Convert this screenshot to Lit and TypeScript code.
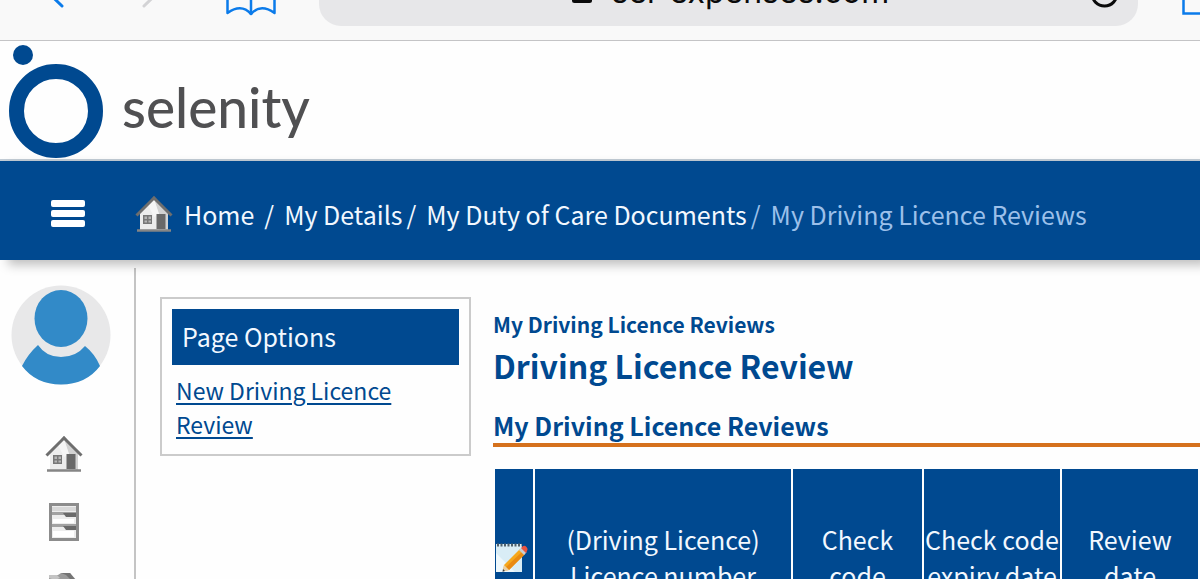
import { LitElement, html, css, svg } from "lit";
import { customElement } from "lit/decorators.js";

const house = html`
  <svg class="house" viewBox="0 0 38 37" aria-hidden="true">
    <path d="M5 17 19 4l14 13v18H5z" fill="#ececec" />
    <path d="M19 4l14 13v18h-9V19z" fill="#d2d2d2" />
    <path d="M19 4l-6 6 6 12 5-3z" fill="#f7f7f7" opacity=".8" />
    <path d="M1.500 20.500 19 3l17.500 17.500" fill="none" stroke="#6e6e6e" stroke-width="3" />
    <path d="M16 4.500 19 1l3 3.500z" fill="#6e6e6e" />
    <rect x="21.500" y="19" width="9" height="15" fill="#696969" />
    <rect x="8" y="20" width="9" height="9" fill="#777" />
    <path d="M9.500 21.500h2.500v2.500H9.500zM13.500 21.500h2.500v2.500h-2.500zM9.500 25.500h2.500v2h-2.500zM13.500 25.500h2.500v2h-2.500z" fill="#b5b5b5" />
    <path d="M2 35.500h34" stroke="#858585" stroke-width="2.500" />
  </svg>
`;

const drawers = html`
  <svg class="drawers" viewBox="0 0 30 38" aria-hidden="true">
    <rect x="1.500" y="1.500" width="27" height="35" fill="#ededed" stroke="#8c8c8c" stroke-width="3" />
    <path d="M3 4h24v4H3z" fill="#d8d8d8" />
    <path d="M3 9h24v3H3z" fill="#a2a2a2" />
    <path d="M14 10h13v4H17z" fill="#6a6a6a" />
    <path d="M3 21h24v3H3z" fill="#a2a2a2" />
    <path d="M14 23h13v4H17z" fill="#6a6a6a" />
    <path d="M4 16h21v4H4zM4 28h21v6H4z" fill="#fff" />
  </svg>
`;

const car = html`
  <svg class="car" viewBox="0 0 34 24" aria-hidden="true">
    <path d="M2 3h9l3-2h9l8 9v12H6l2-9-6-5z" fill="#9b9b9b" />
    <path d="M2 3h8l3 3-5 2-6-2z" fill="#c4c4c4" />
    <path d="M14 1h9l7 9-6-2-5-5z" fill="#747474" />
  </svg>
`;

const notepad = html`
  <svg class="notepad" viewBox="0 0 34 32" role="img" aria-label="Edit">
    <path d="M1 3h26v28H1z" fill="#d9edf6" />
    <path d="M1 31V12L20 31z" fill="#eef8fc" />
    <path d="M2 4h25" stroke="#50606b" stroke-width="3" stroke-dasharray="2 1.500" />
    <path d="M9 24 25 8l5 5-16 16-6 1z" fill="#f6a81c" />
    <path d="m11 26 17-16 2 3-16 16z" fill="#e98a12" />
    <path d="m9 24 5 5-6 1.500z" fill="#e9cfa4" />
    <path d="m8 28 2 2-2.500.800z" fill="#3c3c3c" />
    <path d="m24 9 2.500-2.500 5 5L29 14z" fill="#c9ced1" />
    <path d="m26 7 1.500-1.500q2-1.500 4 .5t.500 4L31 12z" fill="#ea5440" />
  </svg>
`;

const columns = [
  { name: "edit", lines: [] as string[] },
  { name: "licence", lines: ["(Driving Licence)", "Licence number"] },
  { name: "code", lines: ["Check", "code"] },
  { name: "expiry", lines: ["Check code", "expiry date"] },
  { name: "review", lines: ["Review", "date"] },
];

@customElement("browser-bar")
class BrowserBar extends LitElement {
  static styles = css`
    :host {
      display: flex;
      align-items: flex-end;
      box-sizing: border-box;
      height: 41px;
      overflow: hidden;
      background: #f9f9f9;
      border-bottom: 1px solid #c4c4c6;
    }
    .tools {
      display: flex;
      align-items: flex-end;
      box-sizing: border-box;
      width: 319px;
      padding: 0 43px 24px;
      justify-content: space-between;
    }
    .tool {
      display: block;
      padding: 0;
      border: 0;
      background: none;
    }
    .arrow {
      margin-bottom: 6px;
    }
    .forward {
      margin-left: 12px;
    }
    svg {
      display: block;
    }
    .address {
      flex: 1;
      display: grid;
      grid-template-columns: 1fr auto 1fr;
      align-items: end;
      box-sizing: border-box;
      height: 76px;
      margin-bottom: 14px;
      padding: 0 18px 12px 24px;
      border-radius: 22px;
      background: #e7e7e9;
    }
    .field {
      grid-column: 2;
      display: flex;
      align-items: flex-end;
      gap: 20px;
    }
    .lock {
      margin-bottom: 10px;
    }
    .url {
      width: 280px;
      height: 44px;
      padding: 0;
      border: 0;
      background: none;
      color: #0b0b0b;
      font: 32px/44px "Inter", sans-serif;
    }
    .reload {
      justify-self: end;
      margin-bottom: 6px;
    }
    .tabs {
      width: 62px;
      display: flex;
      justify-content: flex-end;
      margin-bottom: 25px;
    }
  `;

  render() {
    return html`
      <div class="tools">
        <button class="tool arrow" aria-label="Back">
          <svg width="22" height="36" viewBox="0 0 22 36"><path d="M19 1 3 16.500 19 32" fill="none" stroke="#0b7bea" stroke-width="3" stroke-linecap="round" /></svg>
        </button>
        <button class="tool arrow forward" aria-label="Forward">
          <svg width="22" height="36" viewBox="0 0 22 36"><path d="M3 1l16 15.500L3 32" fill="none" stroke="#d3d3d5" stroke-width="3" stroke-linecap="round" /></svg>
        </button>
        <button class="tool" aria-label="Bookmarks">
          <svg width="50" height="50" viewBox="0 0 50 50"><g fill="none" stroke="#0b7bea" stroke-width="2.500" stroke-linejoin="round"><path d="M1.500 12v35q14-10 23.500 1 9.500-11 23.500-1V12q-14-8-23.500 2Q15.500 4 1.500 12z" /><path d="M25 14v35" /></g></svg>
        </button>
      </div>
      <div class="address">
        <label class="field">
          <svg class="lock" width="20" height="30" viewBox="0 0 20 30" aria-label="Secure"><rect y="12" width="20" height="17" rx="2.500" fill="#0b0b0b" /><path d="M4 13V8a6 6 0 0 1 12 0v5" fill="none" stroke="#0b0b0b" stroke-width="3" /></svg>
          <input class="url" aria-label="Address" value="sel-expenses.com" />
        </label>
        <button class="tool reload" aria-label="Reload">
          <svg width="30" height="32" viewBox="0 0 30 32"><path d="M27 17A12.500 12.500 0 1 1 15 5" fill="none" stroke="#0b0b0b" stroke-width="3" /></svg>
        </button>
      </div>
      <div class="tabs">
        <button class="tool" aria-label="Tabs">
          <svg width="18" height="36" viewBox="0 0 18 36"><path d="M1.500 1v33.500H36V1z" fill="none" stroke="#0b7bea" stroke-width="2.500" /></svg>
        </button>
      </div>
    `;
  }
}

@customElement("app-root")
class AppRoot extends LitElement {
  static styles = css`
    :host {
      display: block;
      height: 100vh;
      overflow: hidden;
      background: #fefefe;
      color: #004990;
      font-family: "Noto Sans CJK SC", "Noto Sans", sans-serif;
      font-size: 25px;
      line-height: 34px;
    }
    svg {
      display: block;
    }
    a {
      color: inherit;
    }
    button {
      padding: 0;
      border: 0;
      background: none;
    }
    .brand {
      display: flex;
      align-items: flex-end;
      gap: 18px;
      padding: 3px 8px 0;
      border-bottom: 2px solid #c3cdd6;
    }
    .wordmark {
      color: #505052;
      font: 500 55px/66px "Lato", sans-serif;
      padding-bottom: 19px;
    }
    .topbar {
      display: flex;
      align-items: center;
      gap: 50px;
      box-sizing: border-box;
      height: 99px;
      padding: 6px 51px 0;
      background: #004990;
      color: #f2f8ff;
      position: relative;
      box-shadow: 8px 5px 10px rgba(0, 0, 0, 0.25);
    }
    .crumbs {
      display: flex;
      align-items: center;
      margin: 0;
      padding: 0;
      list-style: none;
      white-space: nowrap;
    }
    .crumb {
      display: flex;
      align-items: center;
    }
    .crumb a {
      text-decoration: none;
    }
    .crumb + .crumb::before {
      content: "/";
      margin: 0 10px 0 4px;
    }
    .crumb.first {
      gap: 11px;
      padding-right: 6px;
    }
    .crumb.current {
      color: #9cc0ea;
    }
    .house {
      width: 38px;
      height: 37px;
    }
    .columns {
      display: grid;
      grid-template-columns: 136px 311px minmax(0, 1fr);
      padding-top: 8px;
    }
    .rail {
      display: flex;
      flex-direction: column;
      align-items: center;
      box-sizing: border-box;
      height: 100vh;
      padding: 17px 12px 0 0;
      border-right: 2px solid #c4c4c4;
    }
    .avatar {
      width: 100px;
      height: 100px;
      margin-bottom: 50px;
    }
    .rail a {
      display: block;
      margin: 0 0 31px 6px;
    }
    .drawers {
      width: 30px;
      height: 38px;
    }
    .car {
      width: 34px;
      height: 24px;
    }
    .options {
      align-self: start;
      margin: 29px 0 0 24px;
      width: 311px;
      box-sizing: border-box;
      padding: 10px 10px 13px;
      border: 2px solid #cbcbcb;
    }
    .options-title {
      margin: 0 0 8px;
      padding: 10px 10px 12px;
      background: #004990;
      color: #f2f8ff;
      font-size: 25px;
      font-weight: 400;
    }
    .options a {
      display: block;
      padding: 0 4px;
      font-size: 23px;
      text-underline-offset: 3px;
      text-decoration-thickness: 2px;
    }
    .content {
      padding: 39px 0 0 46px;
    }
    .trail,
    .title,
    .section {
      margin: 0;
      font-weight: 700;
    }
    .trail {
      font-size: 21px;
    }
    .title {
      font-size: 32px;
      line-height: 48px;
    }
    .section {
      padding: 19px 0 1px;
      font-size: 25px;
      border-bottom: 4px solid #d5711d;
    }
    .reviews {
      width: 100%;
      margin-top: 20px;
      table-layout: fixed;
      border-spacing: 2px;
    }
    .reviews th {
      height: 176px;
      padding: 0;
      background: #004990;
      color: #f2f8ff;
      font-weight: 400;
      line-height: 36px;
      white-space: nowrap;
    }
    .edit {
      width: 38px;
    }
    .licence {
      width: 256px;
    }
    .code {
      width: 129px;
    }
    .expiry,
    .review {
      width: 136px;
    }
    .notepad {
      width: 34px;
      height: 32px;
    }
  `;

  render() {
    return html`
      <browser-bar></browser-bar>
      <header class="brand">
        <svg width="96" height="115" viewBox="0 0 96 115" aria-hidden="true">
          <circle cx="15" cy="11" r="10" fill="#004990" />
          <circle cx="48" cy="67" r="39.500" fill="none" stroke="#004990" stroke-width="15" />
        </svg>
        <span class="wordmark">selenity</span>
      </header>
      <nav class="topbar" aria-label="Breadcrumb">
        <button aria-label="Menu">
          <svg width="34" height="27" viewBox="0 0 34 27" fill="#fff">
            ${[0, 10, 20].map((y) => svg`<rect y=${y} width="34" height="7" rx="2" />`)}
          </svg>
        </button>
        <ol class="crumbs">
          <li class="crumb first">${house}<a href="#home">Home</a></li>
          <li class="crumb"><a href="#details">My Details</a></li>
          <li class="crumb"><a href="#documents">My Duty of Care Documents</a></li>
          <li class="crumb current" aria-current="page">My Driving Licence Reviews</li>
        </ol>
      </nav>
      <div class="columns">
        <nav class="rail" aria-label="Shortcuts">
          <svg class="avatar" viewBox="0 0 100 100" role="img" aria-label="Profile">
            <circle cx="50" cy="50" r="49.500" fill="#e8e8e9" />
            <path d="M11 81Q17 69 27 60q8 12 23 12t24-11q10 8 15 20-14 18.500-39 18.500T11 81z" fill="#328ac8" />
            <ellipse cx="50" cy="33.500" rx="26.500" ry="28.500" fill="#328ac8" />
          </svg>
          <a href="#home" aria-label="Home">${house}</a>
          <a href="#claims" aria-label="Claims">${drawers}</a>
          <a href="#vehicles" aria-label="Vehicles">${car}</a>
        </nav>
        <aside class="options">
          <h2 class="options-title">Page Options</h2>
          <a href="#new">New Driving Licence Review</a>
        </aside>
        <main class="content">
          <p class="trail">My Driving Licence Reviews</p>
          <h1 class="title">Driving Licence Review</h1>
          <h2 class="section">My Driving Licence Reviews</h2>
          <table class="reviews">
            <thead>
              <tr>
                ${columns.map(
                  (column) => html`<th class=${column.name} scope="col">
                    ${column.lines.length ? column.lines.map((line, i) => html`${i ? html`<br />` : ""}${line}`) : notepad}
                  </th>`,
                )}
              </tr>
            </thead>
          </table>
        </main>
      </div>
    `;
  }
}
